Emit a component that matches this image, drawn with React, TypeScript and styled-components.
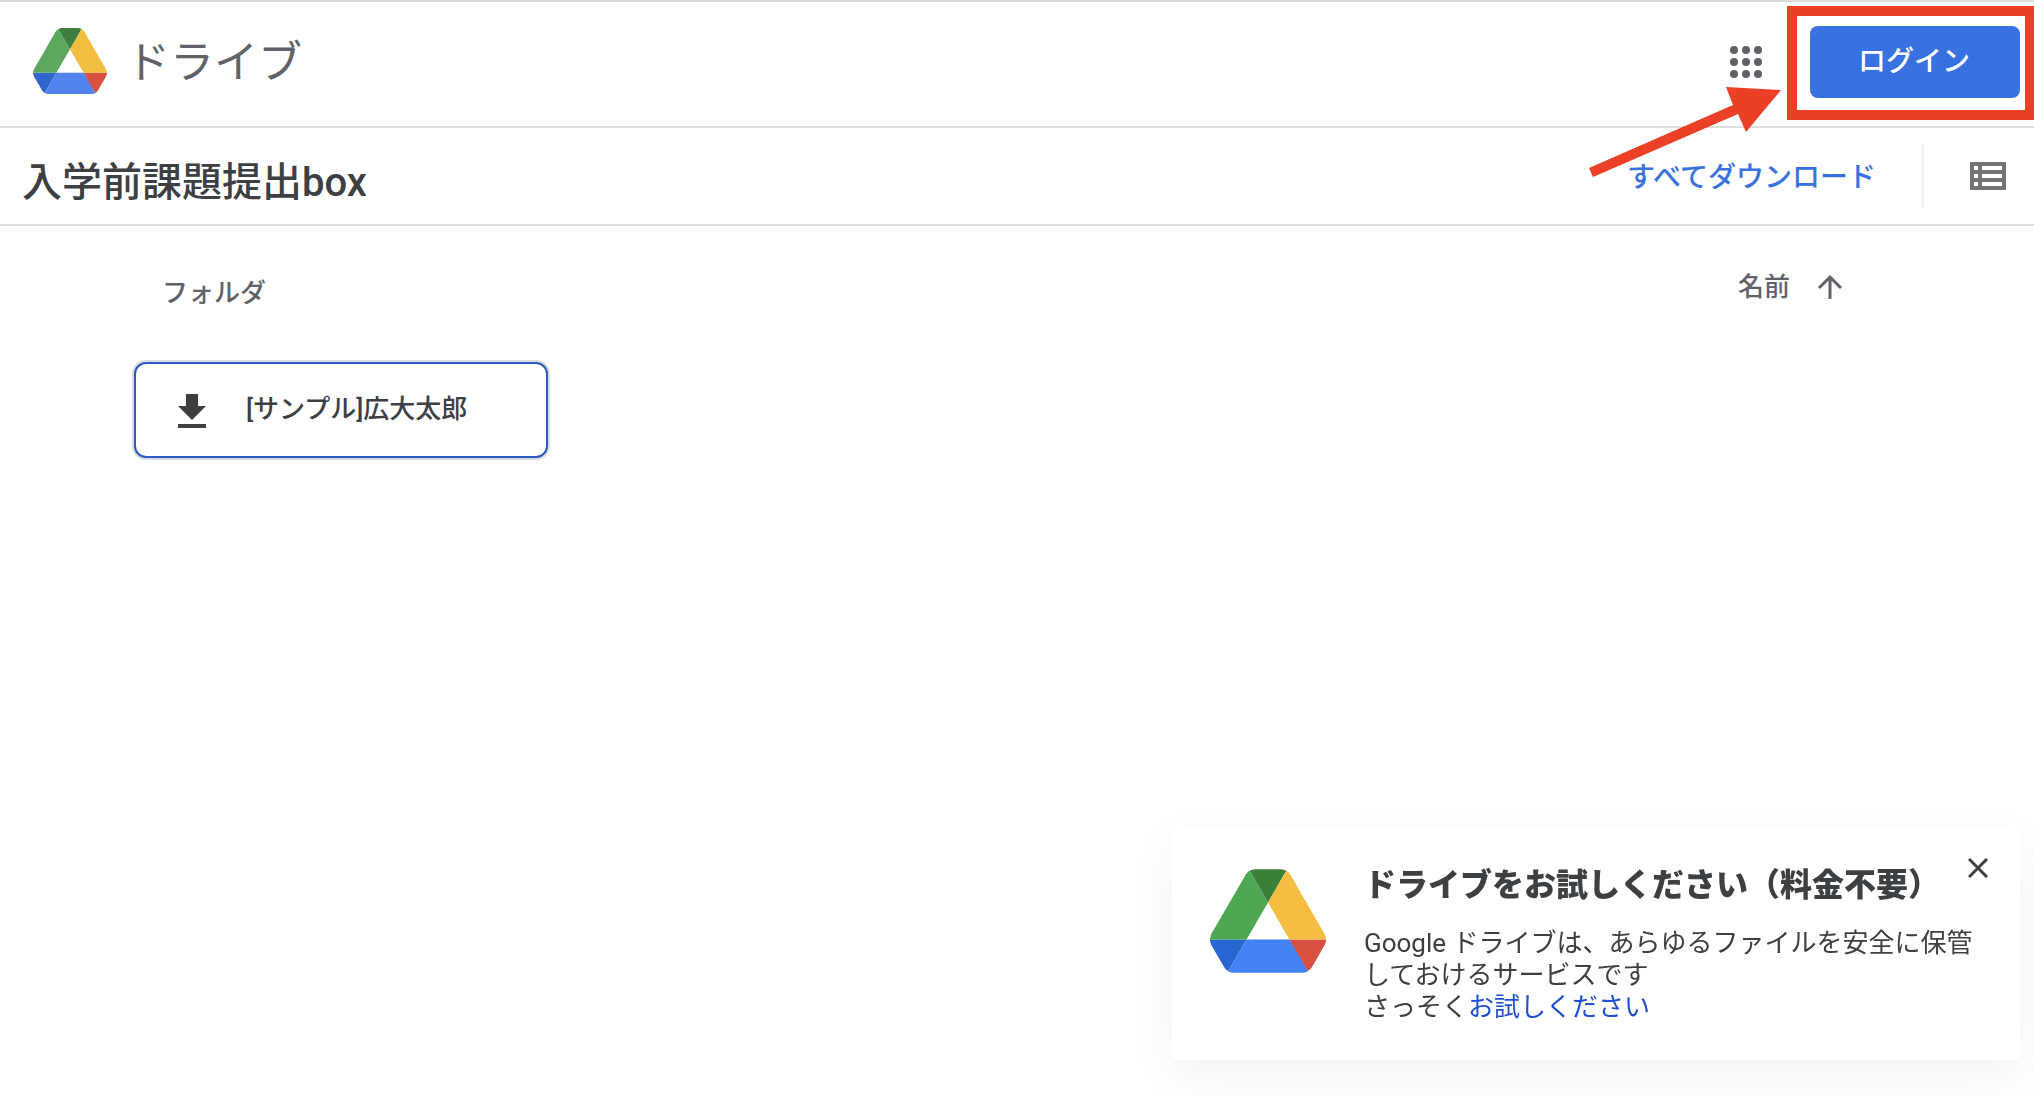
import React from "react";
import styled, { createGlobalStyle } from "styled-components";

const GlobalStyle = createGlobalStyle`
  *, *::before, *::after { box-sizing: border-box; }
  html, body { margin: 0; padding: 0; background: #fff; }
  body {
    color: #3c4043;
    font-family: Roboto, "Noto Sans CJK JP", sans-serif;
    overflow-x: hidden;
  }
  button { font-family: inherit; cursor: pointer; }
  svg { display: block; flex: none; }
`;

const Page = styled.div`
  min-height: 100vh;
  border-top: 2px solid #dadadc;
`;

const Header = styled.header`
  position: relative;
  display: flex;
  align-items: center;
  justify-content: space-between;
  height: 126px;
  padding: 0 14px 4px 33px;
  border-bottom: 2px solid #dadce0;
`;

const Brand = styled.a`
  display: flex;
  align-items: center;
  gap: 19px;
  padding-bottom: 2px;
  color: #5f6368;
  font-size: 44px;
  line-height: 60px;
  text-decoration: none;
`;

const BrandName = styled.span`
  padding-top: 4px;
`;

const HeaderActions = styled.div`
  display: flex;
  align-items: center;
  gap: 48px;
`;

const IconButton = styled.button`
  display: flex;
  align-items: center;
  justify-content: center;
  padding: 0;
  border: 0;
  background: none;
  color: #5f6368;
`;

const LoginArea = styled.div`
  position: relative;
`;

const LoginButton = styled.button`
  display: block;
  width: 210px;
  height: 72px;
  padding: 0 2px 0 0;
  border: 0;
  border-radius: 8px;
  background: #3871e0;
  color: #fff;
  font-size: 28px;
  font-weight: 500;
  line-height: 40px;
`;

const Highlight = styled.span`
  position: absolute;
  inset: -20px -15px -22px -23px;
  border: 10px solid #eb4026;
  pointer-events: none;
`;

const Pointer = styled.svg`
  position: absolute;
  z-index: 1;
  top: 80px;
  right: 250px;
  pointer-events: none;
`;

const TitleBar = styled.div`
  display: flex;
  align-items: center;
  justify-content: space-between;
  height: 98px;
  padding: 0 28px 0 22px;
  border-bottom: 2px solid #dadce0;
`;

const Title = styled.h1`
  margin: 0;
  padding-top: 14px;
  font-size: 40px;
  font-weight: 500;
  line-height: 48px;
`;

const TitleActions = styled.div`
  display: flex;
  align-items: center;
`;

const DownloadAll = styled.button`
  padding: 4px 0 0;
  border: 0;
  background: none;
  color: #3871e0;
  font-size: 28px;
  font-weight: 500;
  line-height: 40px;
`;

const Divider = styled.span`
  width: 2px;
  height: 64px;
  margin: 0 46px;
  background: #f1f1f2;
`;

const Content = styled.main`
  padding: 40px 191px 0 134px;
`;

const ListHeader = styled.div`
  display: flex;
  align-items: flex-start;
  justify-content: space-between;
  padding-left: 28px;
  color: #5f6368;
  font-size: 26px;
  line-height: 42px;
`;

const GroupName = styled.h2`
  margin: 0;
  padding-top: 6px;
  font-size: inherit;
  font-weight: 500;
`;

const SortButton = styled(IconButton)`
  gap: 27px;
  font-size: 26px;
  font-weight: 500;
  line-height: 42px;
`;

const FolderGrid = styled.ul`
  display: grid;
  grid-template-columns: repeat(auto-fill, 414px);
  gap: 32px;
  margin: 48px 0 0;
  padding: 0;
  list-style: none;
`;

const FolderCard = styled.button`
  display: flex;
  align-items: center;
  gap: 40px;
  width: 100%;
  height: 96px;
  padding: 2px 42px 0;
  border: 2px solid #2a5bbf;
  border-radius: 12px;
  background: #fff;
  box-shadow: 0 0 0 2px #dadce0;
  color: #3c4043;
  font-size: 26px;
  font-weight: 500;
  line-height: 40px;
`;

const FolderName = styled.span`
  padding-bottom: 4px;
`;

const Toast = styled.aside`
  position: fixed;
  right: 14px;
  bottom: 36px;
  display: flex;
  align-items: flex-start;
  gap: 38px;
  width: 848px;
  padding: 35px 32px 37px 38px;
  border-radius: 6px;
  background: #fff;
  box-shadow: 0 16px 48px rgba(60, 64, 67, 0.07);
`;

const ToastLogo = styled.div`
  padding-top: 8px;
`;

const ToastTitle = styled.h2`
  margin: 0 0 18px;
  font-size: 32px;
  font-weight: 900;
  line-height: 48px;
`;

const ToastText = styled.p`
  margin: 0;
  font-size: 26px;
  line-height: 32px;
`;

const ToastLink = styled.a`
  color: #1f4fd0;
  text-decoration: none;
`;

const CloseButton = styled(IconButton)`
  position: absolute;
  top: 24px;
  right: 24px;
  width: 36px;
  height: 36px;
  color: #3c4043;
`;

type LogoColors = {
  green: string;
  darkGreen: string;
  yellow: string;
  blue: string;
  darkBlue: string;
  red: string;
};

const headerLogo: LogoColors = {
  green: "#5ba75d",
  darkGreen: "#3c7f40",
  yellow: "#f1be42",
  blue: "#5383ec",
  darkBlue: "#3167cc",
  red: "#d85140",
};

const toastLogo: LogoColors = {
  green: "#4ea853",
  darkGreen: "#3a8038",
  yellow: "#f5bd42",
  blue: "#4382f4",
  darkBlue: "#2866d2",
  red: "#d85040",
};

function DriveLogo({ width, height, colors }: { width: number; height: number; colors: LogoColors }) {
  return (
    <svg width={width} height={height} viewBox="0 0 87.3 78" aria-hidden="true">
      <path fill={colors.darkBlue} d="m6.6 66.85 3.85 6.65c.8 1.4 1.95 2.5 3.3 3.3l13.75-23.8h-27.5c0 1.55.4 3.1 1.2 4.5z" />
      <path fill={colors.green} d="m43.65 25-13.75-23.8c-1.35.8-2.5 1.9-3.3 3.3l-25.4 44a9.06 9.06 0 0 0 -1.2 4.5h27.5z" />
      <path fill={colors.red} d="m73.55 76.8c1.35-.8 2.5-1.9 3.3-3.3l1.6-2.75 7.65-13.25c.8-1.4 1.2-2.95 1.2-4.5h-27.5l5.85 11.5z" />
      <path fill={colors.darkGreen} d="m43.65 25 13.75-23.8c-1.35-.8-2.9-1.2-4.5-1.2h-18.5c-1.6 0-3.15.45-4.5 1.2z" />
      <path fill={colors.blue} d="m59.8 53h-32.3l-13.75 23.8c1.35.8 2.9 1.2 4.5 1.2h50.8c1.6 0 3.15-.45 4.5-1.2z" />
      <path fill={colors.yellow} d="m73.4 26.5-12.7-22c-.8-1.4-1.95-2.5-3.3-3.3l-13.75 23.8 16.15 28h27.45c0-1.55-.4-3.1-1.2-4.5z" />
    </svg>
  );
}

function AppsIcon() {
  const steps = [4, 16, 28];
  return (
    <svg width="32" height="32" viewBox="0 0 32 32" fill="currentColor" aria-hidden="true">
      {steps.map((y) => steps.map((x) => <circle key={`${x}-${y}`} cx={x} cy={y} r="4" />))}
    </svg>
  );
}

function ListIcon() {
  return (
    <svg width="36" height="28" viewBox="0 0 36 28" aria-hidden="true">
      <path
        fill="#757575"
        fillRule="evenodd"
        d="M0 0h36v28H0zM4 4v4h4V4zM12 4v4h20V4zM4 12v4h4v-4zM12 12v4h20v-4zM4 20v4h4v-4zM12 20v4h20v-4z"
      />
    </svg>
  );
}

export default function App() {
  return (
    <>
      <GlobalStyle />
      <Page>
        <Header>
          <Brand href="#">
            <DriveLogo width={74} height={66} colors={headerLogo} />
            <BrandName>ドライブ</BrandName>
          </Brand>
          <HeaderActions>
            <IconButton aria-label="Google アプリ">
              <AppsIcon />
            </IconButton>
            <LoginArea>
              <LoginButton>ログイン</LoginButton>
              <Highlight />
            </LoginArea>
          </HeaderActions>
          <Pointer width="196" height="100" viewBox="0 0 196 100" aria-hidden="true">
            <path fill="#eb4026" d="M1 86 145 23 138 5 193 8 158 50 150 32 5 95Z" />
          </Pointer>
        </Header>

        <TitleBar>
          <Title>入学前課題提出box</Title>
          <TitleActions>
            <DownloadAll>すべてダウンロード</DownloadAll>
            <Divider />
            <IconButton aria-label="リスト表示">
              <ListIcon />
            </IconButton>
          </TitleActions>
        </TitleBar>

        <Content>
          <ListHeader>
            <GroupName>フォルダ</GroupName>
            <SortButton>
              名前
              <svg width="26" height="26" viewBox="0 0 26 26" fill="none" stroke="currentColor" strokeWidth="3" aria-hidden="true">
                <path d="M13 25V3M2 14 13 3l11 11" />
              </svg>
            </SortButton>
          </ListHeader>
          <FolderGrid>
            <li>
              <FolderCard>
                <svg width="28" height="34" viewBox="0 0 28 34" fill="currentColor" aria-hidden="true">
                  <path d="M8 0h12v12h8L14 26 0 12h8zM0 30h28v4H0z" />
                </svg>
                <FolderName>[サンプル]広大太郎</FolderName>
              </FolderCard>
            </li>
          </FolderGrid>
        </Content>

        <Toast>
          <ToastLogo>
            <DriveLogo width={116} height={104} colors={toastLogo} />
          </ToastLogo>
          <div>
            <ToastTitle>ドライブをお試しください（料金不要）</ToastTitle>
            <ToastText>
              Google ドライブは、あらゆるファイルを安全に保管しておけるサービスです
              <br />
              さっそく<ToastLink href="#">お試しください</ToastLink>
            </ToastText>
          </div>
          <CloseButton aria-label="閉じる">
            <svg width="20" height="20" viewBox="0 0 20 20" fill="none" stroke="currentColor" strokeWidth="3" aria-hidden="true">
              <path d="M1 1l18 18M19 1 1 19" />
            </svg>
          </CloseButton>
        </Toast>
      </Page>
    </>
  );
}
